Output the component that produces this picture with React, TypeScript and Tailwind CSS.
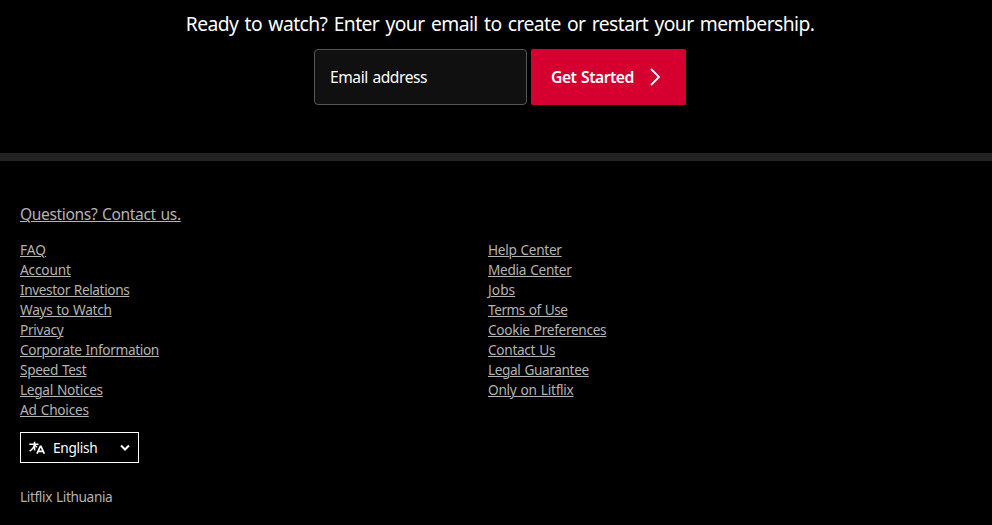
import React from "react";

type FooterLink = { label: string; tracking: string };

const leftLinks: FooterLink[] = [
  { label: "FAQ", tracking: "tracking-[0.05px]" },
  { label: "Account", tracking: "tracking-[-0.16px]" },
  { label: "Investor Relations", tracking: "tracking-[-0.4px]" },
  { label: "Ways to Watch", tracking: "tracking-[-0.3px]" },
  { label: "Privacy", tracking: "tracking-[-0.3px]" },
  { label: "Corporate Information", tracking: "tracking-[-0.36px]" },
  { label: "Speed Test", tracking: "tracking-[-0.35px]" },
  { label: "Legal Notices", tracking: "tracking-[-0.3px]" },
  { label: "Ad Choices", tracking: "tracking-[-0.24px]" },
];

const rightLinks: FooterLink[] = [
  { label: "Help Center", tracking: "tracking-[-0.32px]" },
  { label: "Media Center", tracking: "tracking-[-0.3px]" },
  { label: "Jobs", tracking: "tracking-[0.07px]" },
  { label: "Terms of Use", tracking: "tracking-[-0.48px]" },
  { label: "Cookie Preferences", tracking: "tracking-[-0.32px]" },
  { label: "Contact Us", tracking: "tracking-[-0.31px]" },
  { label: "Legal Guarantee", tracking: "tracking-[-0.39px]" },
  { label: "Only on Litflix", tracking: "tracking-[-0.27px]" },
];

function LinkColumn({ links }: { links: FooterLink[] }) {
  return (
    <ul className="w-[468px] text-[13.67px] leading-5 [word-spacing:0.8px]">
      {links.map((link) => (
        <li key={link.label} className="h-5 whitespace-nowrap">
          <a href="#" className={`underline decoration-1 underline-offset-1 ${link.tracking}`}>
            {link.label}
          </a>
        </li>
      ))}
    </ul>
  );
}

function TranslateIcon() {
  return (
    <svg width="16" height="16" viewBox="0 0 16 16" fill="none" stroke="currentColor" strokeWidth="1.5">
      <path d="M0.3 4.2H9.5M5.6 1.8V4.5M5.6 4.2C5 7.4 3.2 9.6 0.6 11.2M5.6 4.4V10.6" />
      <path d="M6 5.2L8.2 7.2" strokeWidth="1.2" />
      <path d="M8 13.7L11.3 6.4H12L15.3 13.7M9.2 11.3H14.2" strokeWidth="1.7" />
    </svg>
  );
}

export default function App() {
  return (
    <div className="h-[525px] w-full overflow-hidden bg-black font-['Noto_Sans','Open_Sans',sans-serif] text-white">
      <section className="flex h-[153px] flex-col items-center pl-2 pt-2">
        <h3 className="h-[41px] whitespace-nowrap text-[19.3px] leading-8 tracking-[-0.58px] [word-spacing:1.9px]">
          Ready to watch? Enter your email to create or restart your membership.
        </h3>
        <form className="flex gap-1">
          <div className="flex h-14 w-[213px] items-center rounded-[4px] border border-[#555556] bg-[#101010] pl-[15px] text-[15.6px] tracking-[-0.45px] [word-spacing:1px]">
            <span className="pt-0.5">Email address</span>
          </div>
          <button type="button" className="flex h-14 w-[155px] items-center rounded-[2px] bg-[#d5002f] pl-5 text-[15.7px] font-semibold tracking-[-0.5px] [word-spacing:1px]">
            <span className="w-[99px] whitespace-nowrap pt-0.5 text-left">Get Started</span>
            <svg width="12" height="18" viewBox="0 0 12 18" fill="none" stroke="currentColor" strokeWidth="1.8">
              <path d="M1 1L9 9L1 17" />
            </svg>
          </button>
        </form>
      </section>
      <div className="h-2 bg-[#232323]" />
      <footer className="px-5 pt-10 text-[#b3b3b3]">
        <div className="h-[39px] text-[15.6px] leading-[26px] tracking-[-0.37px] [word-spacing:1px]">
          <a href="#" className="underline decoration-1 underline-offset-1">Questions? Contact us.</a>
        </div>
        <div className="flex">
          <LinkColumn links={leftLinks} />
          <LinkColumn links={rightLinks} />
        </div>
        <div className="mt-3 flex h-[31px] w-[119px] items-center border border-white pl-2 text-[13.67px] tracking-[-0.29px] text-white">
          <TranslateIcon />
          <span className="ml-2 w-[67px] pt-0.5">English</span>
          <svg width="10" height="8" viewBox="0 0 10 8" fill="none" stroke="currentColor" strokeWidth="2">
            <path d="M1 1.5L5 5.5L9 1.5" />
          </svg>
        </div>
        <p className="mt-6 text-[13.67px] leading-5 tracking-[-0.37px] [word-spacing:0.8px]">Litflix Lithuania</p>
      </footer>
    </div>
  );
}
